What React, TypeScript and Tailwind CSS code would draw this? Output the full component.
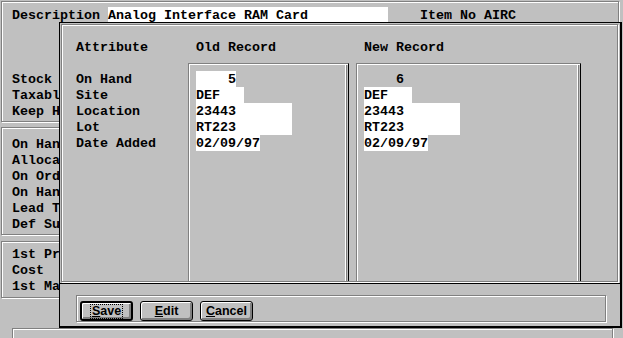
const etched =
  "border border-[#808080] shadow-[inset_1px_1px_0_#fff,1px_1px_0_#fff]";

// only the part of each label that shows beside the dialog
const bgRows = {
  a: ["Stock", "Taxabl", "Keep H"],
  b: ["On Han", "Alloca", "On Ord", "On Han", "Lead T", "Def Su"],
  c: ["1st Pr", "Cost", "1st Ma"],
};

const labels = ["On Hand", "Site", "Location", "Lot", "Date Added"];

type Rec = { onHand: string; site: string; location: string; lot: string; date: string };

function RecordBox({ rec, whiteQty, className }: { rec: Rec; whiteQty: boolean; className: string }) {
  return (
    <div
      className={`flex flex-col items-start border-l border-r border-t border-[#808080] border-r-black pl-[7px] pt-[7px] shadow-[inset_1px_1px_0_#fff,inset_-1px_0_0_#c0c0c0,inset_-2px_0_0_#808080,inset_-3px_0_0_#fff] ${className}`}
    >
      <div className={`h-4 w-[40px] text-right ${whiteQty ? "bg-white" : ""}`}>{rec.onHand}</div>
      <div className="h-4 w-[48px] bg-white">{rec.site}</div>
      <div className="h-4 w-[96px] bg-white">{rec.location}</div>
      <div className="h-4 w-[96px] bg-white">{rec.lot}</div>
      <div className="h-4 w-[64px] bg-white">{rec.date}</div>
    </div>
  );
}

function Button({ u, rest, def }: { u: string; rest: string; def?: boolean }) {
  return (
    <button
      className={`flex h-5 w-[53px] items-center justify-center rounded-[3px] border-black font-['Liberation_Sans',Arial,sans-serif] text-[12.5px] font-bold leading-none shadow-[inset_1px_1px_0_#fff,inset_-2px_-2px_0_#808080] ${def ? "border-2" : "border"}`}
    >
      <span className={`flex h-[15px] items-center px-px ${def ? "border border-dotted border-black" : ""}`}>
        <span className="underline">{u}</span>
        {rest}
      </span>
    </button>
  );
}

export default function App() {
  const oldRec: Rec = { onHand: "5", site: "DEF", location: "23443", lot: "RT223", date: "02/09/97" };
  const newRec: Rec = { onHand: "6", site: "DEF", location: "23443", lot: "RT223", date: "02/09/97" };

  return (
    <div className="relative h-[338px] w-[623px] overflow-hidden whitespace-pre bg-[#c0c0c0] font-['Liberation_Mono',monospace] text-[13.333px] font-bold leading-[18px] text-black">
      {/* item window behind */}
      <div className="flex flex-col pl-px pt-px">
        <div className={`h-[121px] w-[618px] pl-[10px] pt-[5px] ${etched}`}>
          <div className="flex h-4">
            <span>Description</span>
            <span className="ml-2 h-4 w-[280px] bg-white">Analog Interface RAM Card</span>
            <span className="ml-8">Item No AIRC</span>
          </div>
          <div className="mt-12">
            {bgRows.a.map((r, i) => (
              <div key={i} className="h-4">
                {r}
              </div>
            ))}
          </div>
        </div>
        <div className={`mt-[5px] h-[108px] w-[618px] pl-[10px] pt-2 ${etched}`}>
          {bgRows.b.map((r, i) => (
            <div key={i} className="h-4">
              {r}
            </div>
          ))}
        </div>
        <div className={`mt-[6px] h-[57px] w-[618px] pl-[10px] pt-1 ${etched}`}>
          {bgRows.c.map((r, i) => (
            <div key={i} className="h-4">
              {r}
            </div>
          ))}
        </div>
        <div className={`ml-[11px] mt-[30px] h-[30px] w-[601px] ${etched}`} />
      </div>

      {/* compare dialog */}
      <div className="absolute left-[59px] top-[22px] flex h-[306px] w-[563px] flex-col border-b-2 border-l border-r-2 border-t border-black bg-[#c0c0c0]">
        <div className="h-[261px] border-b border-black pl-px pt-px">
          <div className={`flex h-[258px] w-[557px] flex-col pl-[14px] pt-[14px] ${etched}`}>
            <div className="flex h-4">
              <div className="w-[112px]">Attribute</div>
              <div className="w-[161px] pl-2">Old Record</div>
              <div className="ml-[7px] w-[225px] pl-2">New Record</div>
            </div>
            <div className="mt-2 flex flex-1">
              <div className="w-[112px] pt-2">
                {labels.map((l) => (
                  <div key={l} className="h-4">
                    {l}
                  </div>
                ))}
              </div>
              <RecordBox rec={oldRec} whiteQty className="w-[161px]" />
              <RecordBox rec={newRec} whiteQty={false} className="ml-[7px] w-[225px]" />
            </div>
          </div>
        </div>
        <div className="flex-1 pl-4 pt-[11px]">
          <div className={`flex h-[27px] w-[530px] gap-[7px] pl-[3px] pt-[5px] ${etched}`}>
            <Button u="S" rest="ave" def />
            <Button u="E" rest="dit" />
            <Button u="C" rest="ancel" />
          </div>
        </div>
      </div>
    </div>
  );
}
